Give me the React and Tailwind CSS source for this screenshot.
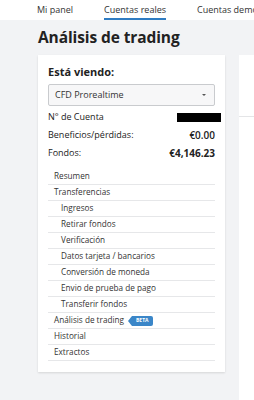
import React from "react";

const subs = ["Ingresos", "Retirar fondos", "Verificación", "Datos tarjeta / bancarios", "Conversión de moneda", "Envio de prueba de pago", "Transferir fondos"];

function Row({ children, indent }) {
  return (
    <div className={`h-[16px] flex items-center border-b border-[#e6e7e9] ${indent ? "pl-[13px]" : "pl-[6px]"}`}>
      {children}
    </div>
  );
}

export default function App() {
  return (
    <div className="w-[254px] h-[400px] overflow-hidden flex flex-col bg-[#f2f3f5] text-[#222]" style={{ fontFamily: '"Open Sans", "Noto Sans", sans-serif' }}>
      <div className="h-[20px] shrink-0 bg-white flex items-stretch pl-[37px] text-[9px] text-[#333] whitespace-nowrap">
        <div className="flex items-center">Mi panel</div>
        <div className="flex items-center ml-[31px] border-b-[2px] border-[#2f7cc2] pt-[2px]">Cuentas reales</div>
        <div className="flex items-center ml-[31px]">Cuentas demo</div>
      </div>
      <div className="flex-1 flex flex-col pl-[38px]">
        <div className="h-[35px] flex items-center font-bold text-[15.5px] text-[#222] tracking-[-0.1px]">Análisis de trading</div>
        <div className="flex gap-[14px] flex-1">
          <div className="w-[187px] self-start bg-white shadow-[0_1px_2px_rgba(0,0,0,0.12)] px-[10px] pt-[9px] pb-[11px]">
            <div className="font-bold text-[11px] leading-[16px] text-[#222]">Está viendo:</div>
            <div className="mt-[4px] h-[22px] border border-[#c9cbce] rounded-[2px] bg-[#f7f7f8] flex items-center justify-between pl-[6px] pr-[8px] text-[9px] text-[#333]">
              <span>CFD Prorealtime</span>
              <span className="w-0 h-0 border-l-[2px] border-r-[2px] border-t-[2px] border-l-transparent border-r-transparent border-t-[#555]"></span>
            </div>
            <div className="mt-[5px] flex items-center justify-between text-[9px] h-[12px]">
              <span>N° de Cuenta</span>
              <span className="w-[44px] h-[9px] bg-black -mr-[6px]"></span>
            </div>
            <div className="mt-[6px] flex items-center justify-between text-[9px] h-[12px]">
              <span>Beneficios/pérdidas:</span>
              <span className="text-[10px] font-semibold">€0.00</span>
            </div>
            <div className="mt-[6px] flex items-center justify-between text-[9px] h-[12px]">
              <span>Fondos:</span>
              <span className="text-[10px] font-bold">€4,146.23</span>
            </div>
            <div className="mt-[10px] text-[8.2px] text-[#333]">
              <Row>Resumen</Row>
              <Row>Transferencias</Row>
              {subs.map((s) => (
                <Row key={s} indent>{s}</Row>
              ))}
              <Row>
                Análisis de trading
                <span className="ml-[8px] relative h-[10px] flex items-center bg-[#3a86c8] text-white text-[5px] font-bold px-[4px] rounded-r-[2px]">
                  <span className="absolute -left-[4px] top-0 w-0 h-0 border-t-[5px] border-b-[5px] border-r-[4px] border-t-transparent border-b-transparent border-r-[#3a86c8]"></span>
                  BETA
                </span>
              </Row>
              <Row>Historial</Row>
              <Row>Extractos</Row>
            </div>
          </div>
          <div className="flex-1 bg-white">
            <div className="h-[62px] border-b border-[#e4e5e7]"></div>
          </div>
        </div>
      </div>
    </div>
  );
}
